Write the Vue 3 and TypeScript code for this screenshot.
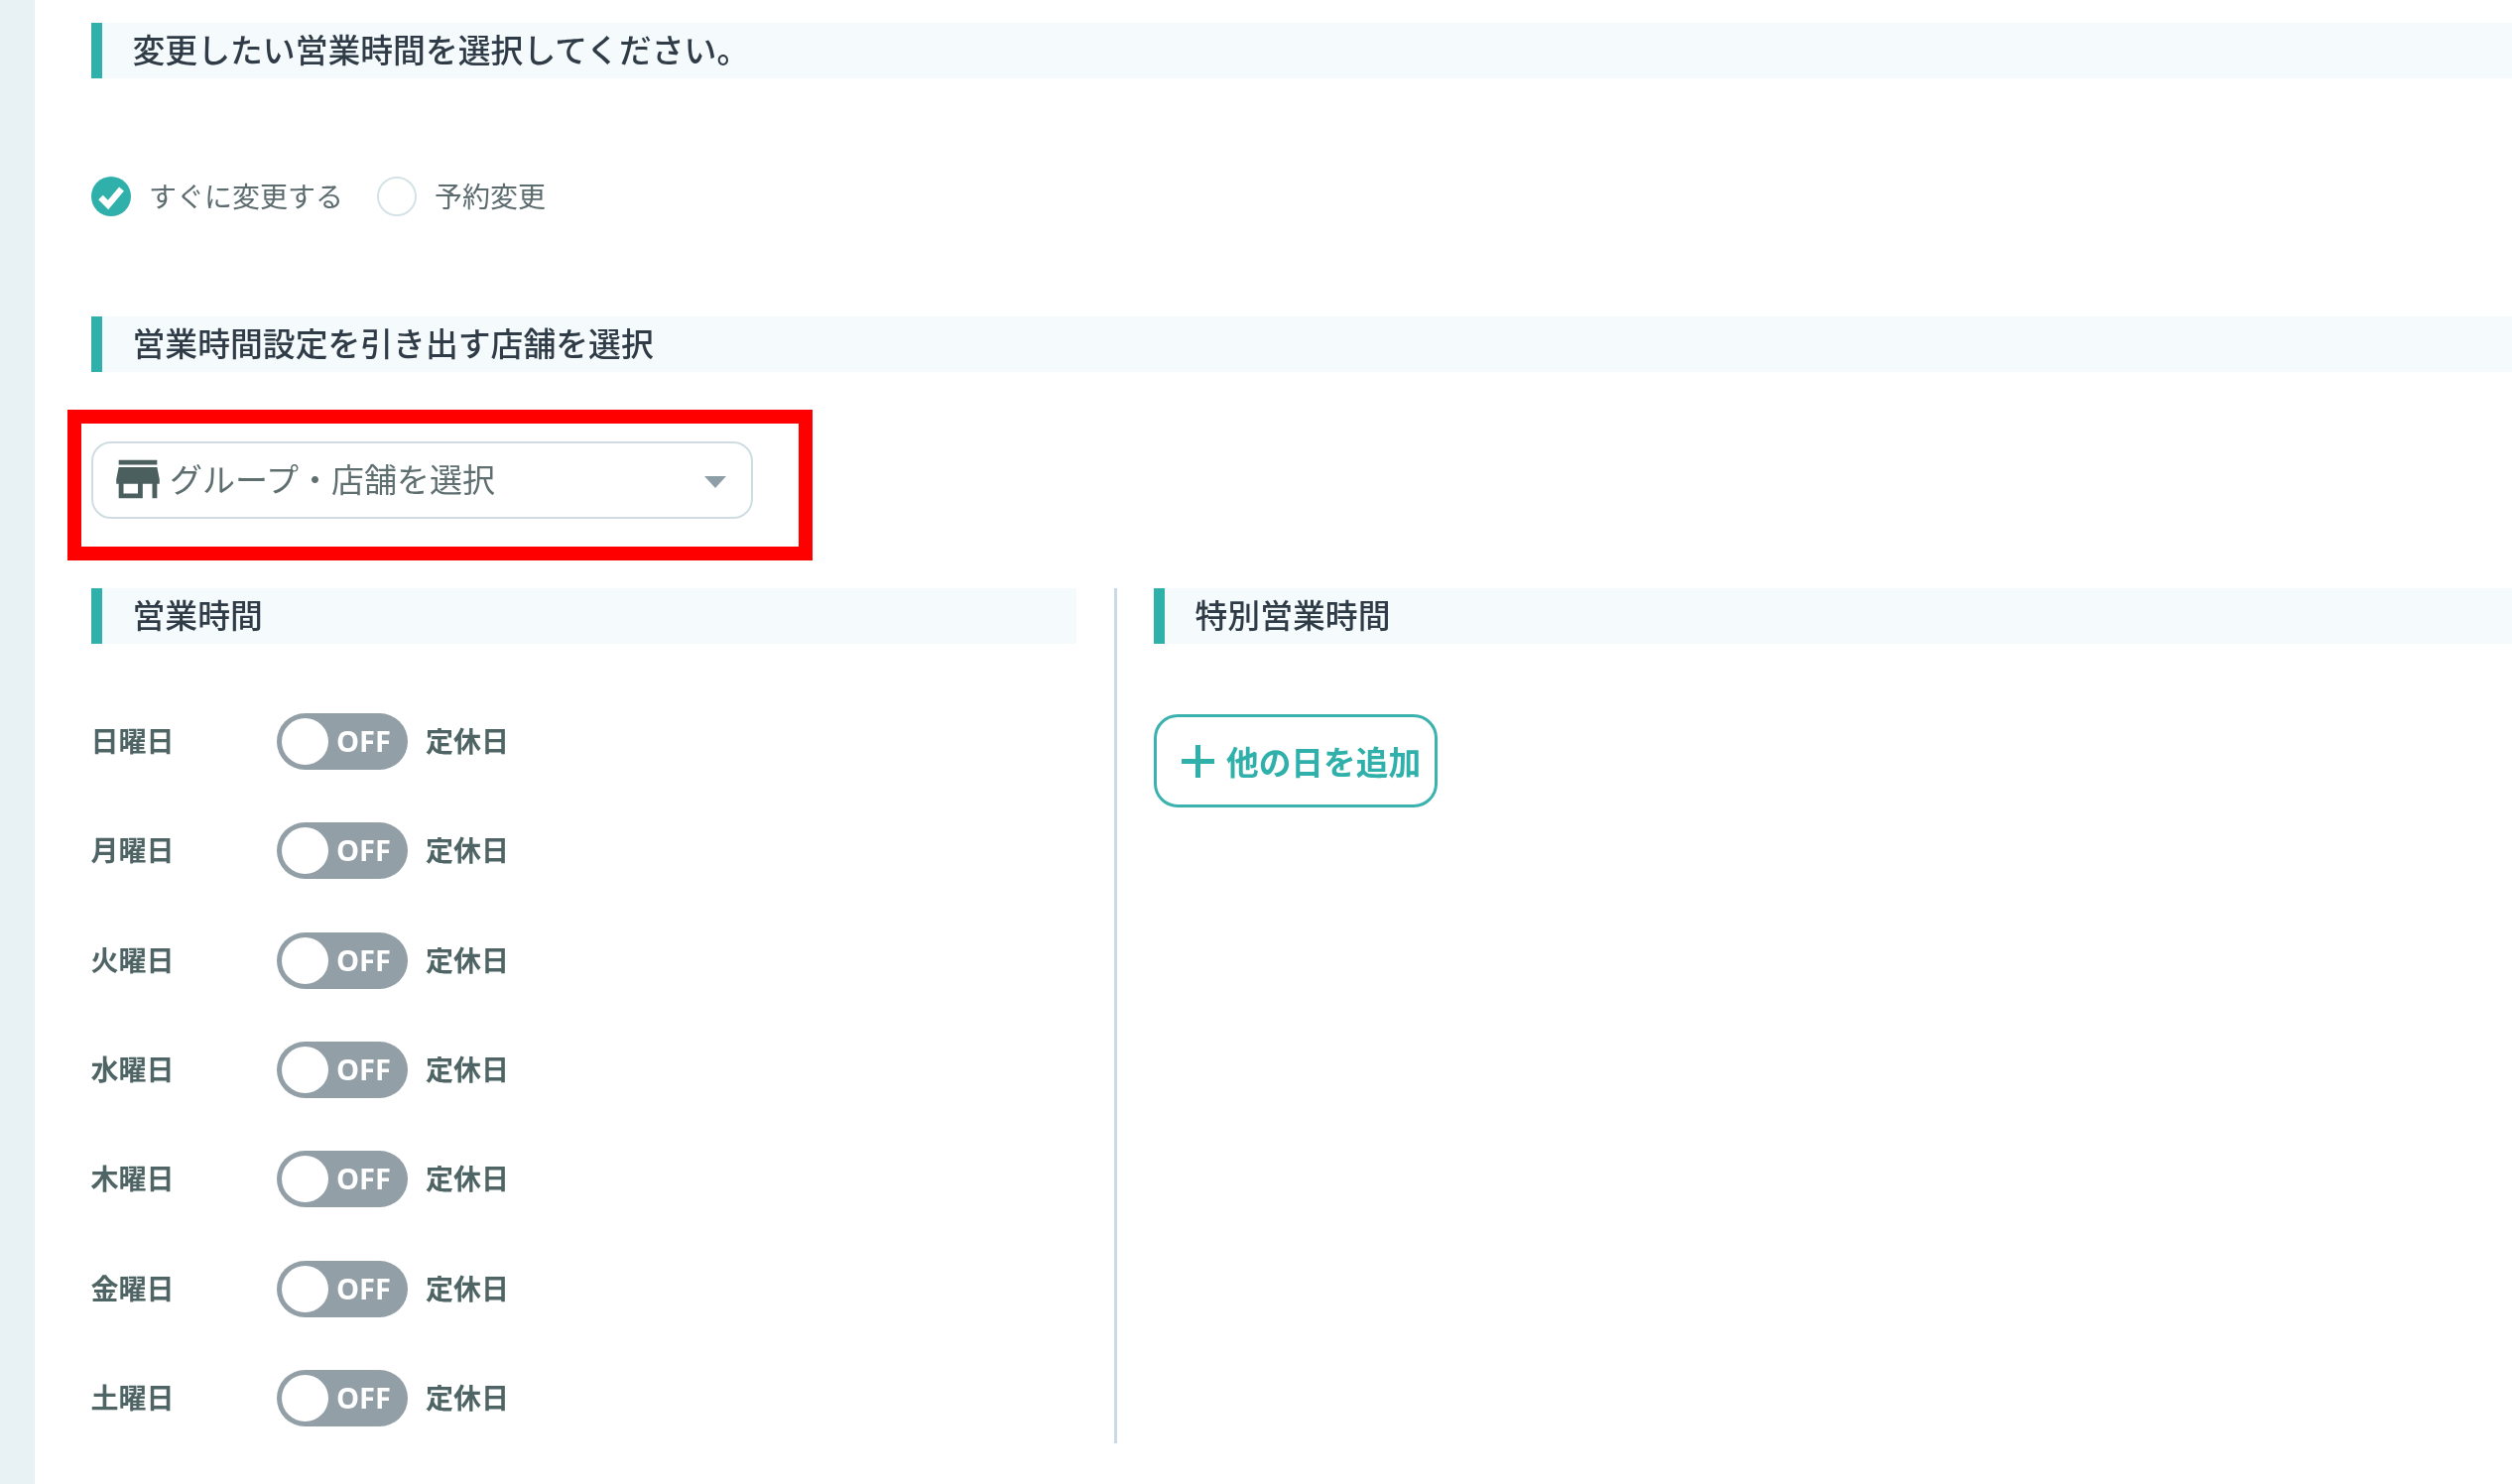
<script setup lang="ts">
const days: string[] = ['日曜日', '月曜日', '火曜日', '水曜日', '木曜日', '金曜日', '土曜日']
</script>

<template>
  <div class="page">
    <aside class="rail"></aside>
    <main class="main">
      <h2 class="heading"><span class="heading-text">変更したい営業時間を選択してください。</span></h2>

      <div class="radios">
        <label class="radio">
          <svg class="radio-mark" width="40" height="40" viewBox="0 0 40 40">
            <circle cx="20" cy="20" r="20" fill="#2fb0aa" />
            <path d="M9.5 21 L17 28.5 L30.5 12.5" fill="none" stroke="#fff" stroke-width="6.4" />
          </svg>
          <span class="radio-text">すぐに変更する</span>
        </label>
        <label class="radio">
          <span class="radio-off"></span>
          <span class="radio-text">予約変更</span>
        </label>
      </div>

      <h2 class="heading second"><span class="heading-text">営業時間設定を引き出す店舗を選択</span></h2>

      <div class="select-wrap">
        <div class="select">
          <svg class="store" width="58" height="58" viewBox="0 0 24 24">
            <path fill="#4c5f5f" d="M20 4H4v2h16V4zm1 10v-2l-1-5H4l-1 5v2h1v6h10v-6h4v6h2v-6h1zm-9 4H6v-4h6v4z" />
          </svg>
          <span class="select-text">グループ・店舗を選択</span>
          <span class="caret"></span>
        </div>
        <div class="callout"></div>
      </div>

      <div class="columns">
        <section class="col-left">
          <h2 class="heading"><span class="heading-text">営業時間</span></h2>
          <ul class="rows">
            <li v-for="day in days" :key="day" class="row">
              <span class="day">{{ day }}</span>
              <span class="toggle">
                <span class="knob"></span>
                <span class="off">OFF</span>
              </span>
              <span class="state">定休日</span>
            </li>
          </ul>
        </section>
        <div class="divider"></div>
        <section class="col-right">
          <h2 class="heading"><span class="heading-text">特別営業時間</span></h2>
          <button class="add" type="button">
            <svg width="33" height="33" viewBox="0 0 33 33">
              <path d="M16.5 0 V33 M0 16.5 H33" stroke="#2fb0aa" stroke-width="5" fill="none" />
            </svg>
            <span class="add-text">他の日を追加</span>
          </button>
        </section>
      </div>
    </main>
  </div>
</template>

<style scoped>
.page {
  display: flex;
  width: 2532px;
  height: 1496px;
  overflow: hidden;
  background: #fff;
  font-family: "Noto Sans CJK JP", "Noto Sans", sans-serif;
}
.rail {
  flex: 0 0 35px;
  background: #e8f1f3;
}
.main {
  flex: 1;
  min-width: 0;
  padding: 23px 0 0 57px;
}
.heading {
  box-sizing: border-box;
  height: 56px;
  margin: 0;
  padding-left: 30.5px;
  border-left: 11px solid #2fb0aa;
  background: #f5fafc;
  color: #2f3b46;
  font-size: 32.85px;
  font-weight: 500;
  line-height: 56px;
  filter: blur(0.5px);
}
.heading-text {
  position: relative;
  top: -2px;
}
.second {
  margin-top: 101px;
}
.radios {
  display: flex;
  gap: 34px;
  height: 40px;
  margin-top: 99px;
  filter: blur(0.5px);
}
.radio {
  display: flex;
  align-items: center;
  gap: 18px;
  color: #5b6b6e;
  font-size: 28px;
  line-height: 40px;
}
.radio-text {
  margin-top: -2px;
}
.radio-off {
  box-sizing: border-box;
  width: 40px;
  height: 40px;
  border: 2px solid #d5e2e6;
  border-radius: 50%;
}
.select-wrap {
  position: relative;
  width: 667px;
  margin-top: 70px;
}
.select {
  box-sizing: border-box;
  display: flex;
  align-items: center;
  height: 78px;
  padding: 0 25px 0 16px;
  border: 2.5px solid #cfdde3;
  border-radius: 20px;
  color: #5f6f70;
  font-size: 33px;
  filter: blur(0.5px);
}
.store {
  margin-right: 3px;
  margin-top: -2px;
}
.select-text {
  flex: 1;
  margin-top: -4px;
}
.caret {
  width: 0;
  height: 0;
  margin-top: 4px;
  border-top: 12px solid #8d9ea6;
  border-left: 11px solid transparent;
  border-right: 11px solid transparent;
}
.callout {
  position: absolute;
  top: -32px;
  left: -24px;
  width: 751px;
  height: 152px;
  box-sizing: border-box;
  border: 14px solid #ff0000;
  pointer-events: none;
}
.columns {
  display: flex;
  margin-top: 70px;
}
.col-left {
  flex: 0 0 993px;
}
.divider {
  flex: 0 0 2.5px;
  height: 862px;
  margin: 0 37.5px 0 38px;
  background: #c8dae2;
}
.col-right {
  flex: 1;
  min-width: 0;
}
.rows {
  display: flex;
  flex-direction: column;
  gap: 53.33px;
  margin: 70px 0 0;
  padding: 0;
  list-style: none;
}
.row {
  display: flex;
  align-items: center;
  height: 57px;
  color: #4f6464;
  font-size: 28px;
  font-weight: 700;
  filter: blur(0.5px);
}
.day {
  flex: 0 0 187px;
  margin-top: -3px;
  margin-left: -0.5px;
  padding-right: 0.5px;
}
.state {
  margin-top: -3px;
}
.toggle {
  position: relative;
  display: block;
  flex: 0 0 132px;
  height: 57px;
  margin-right: 18px;
  border-radius: 29px;
  background: #929fa6;
}
.knob {
  position: absolute;
  top: 5px;
  left: 5px;
  width: 47px;
  height: 47px;
  border-radius: 50%;
  background: #fff;
}
.off {
  position: absolute;
  top: 0;
  left: 60px;
  color: #fff;
  font-family: "Open Sans", "Noto Sans", sans-serif;
  font-size: 29px;
  font-weight: 700;
  line-height: 55px;
}
.add {
  box-sizing: border-box;
  display: flex;
  align-items: center;
  gap: 12px;
  width: 286px;
  height: 94px;
  margin-top: 71px;
  padding: 0 0 0 25px;
  border: 3px solid #3bb2ad;
  border-radius: 24px;
  background: #fff;
  color: #2fb0aa;
  font-family: inherit;
  font-size: 32.7px;
  font-weight: 700;
  white-space: nowrap;
  filter: blur(0.5px);
}
.add-text {
  margin-top: -2px;
}
</style>
